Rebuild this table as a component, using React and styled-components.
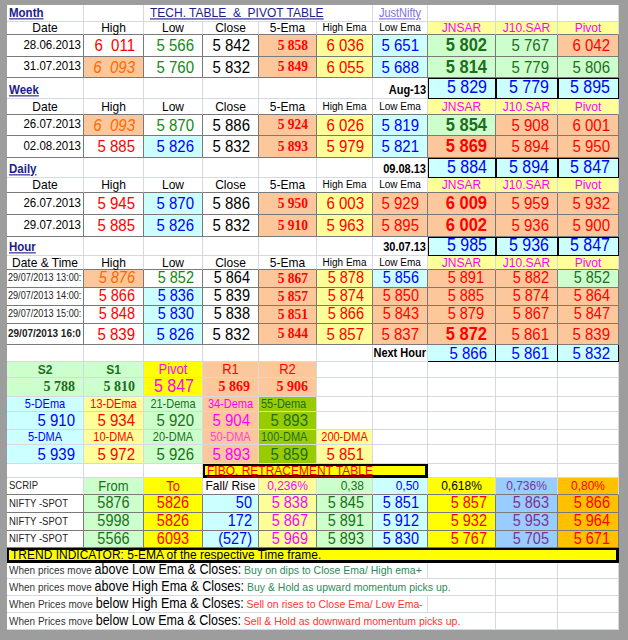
import React from 'react';
import styled, { createGlobalStyle } from 'styled-components';

const GRID = '#d5d9e4';
const DK = '#7a7a7a';
const BK = '#000';

const OR = '#fcc89b', LY = '#ffff99', CY = '#ccffff', LG = '#ccffcc', YE = '#ffff00', OL = '#99cc00', LB = '#99ccff', GD = '#ffc000';
const RED = '#ff0000', GR = '#138a13', BL = '#0000ff', MG = '#ff00ff', ORT = '#ff6600', PU = '#7f3390', NV = '#1c1c8c', DG = '#1c6e1c';
const GT = '#2e8b57', RT = '#ff3333';

const Global = createGlobalStyle`
  html, body { margin: 0; padding: 0; background: #9d9d9d; }
  body { font-family: "Liberation Sans", Arial, sans-serif; }
`;

const COLS = '77px 60px 59px 56px 58px 56px 55px 68px 62px 61px';

const FAM = {
  sans: '"Liberation Sans", Arial, sans-serif',
  serif: '"Liberation Serif", "Times New Roman", serif',
  narrow: '"Liberation Sans Narrow", "Arial Narrow", "Liberation Sans", sans-serif',
};
const JUST = { l: 'flex-start', c: 'center', r: 'flex-end' };
const SHADOW = {
  frame: 'inset 1px 1px 0 #000',
  thick: 'inset 0 0 0 2px #000',
};

const Page = styled.div`
  width: 628px;
  height: 640px;
  box-sizing: border-box;
  padding: 5px 0 0 7px;
  background: #9d9d9d;
  overflow: hidden;
`;

const Sheet = styled.div`
  width: 612px;
  background: #fff;
  display: flex;
  flex-direction: column;
`;

const Row = styled.div`
  display: grid;
  grid-template-columns: ${COLS};
  height: ${p => p.$h}px;
`;

const Cell = styled.div`
  grid-column: span ${p => p.$span || 1};
  display: flex;
  align-items: ${p => (p.$va === 'b' ? 'flex-end' : 'center')};
  justify-content: ${p => JUST[p.$al || 'c']};
  box-sizing: border-box;
  min-width: 0;
  padding: 0 ${p => p.$pr ?? 2}px ${p => (p.$va === 'b' ? 2 : 0)}px ${p => p.$pl ?? 2}px;
  background: ${p => p.$bg || 'transparent'};
  color: ${p => p.$c || '#000'};
  font-family: ${p => FAM[p.$ff || 'sans']};
  font-size: ${p => p.$fs || 12}px;
  font-weight: ${p => p.$fw || 400};
  font-style: ${p => (p.$it ? 'italic' : 'normal')};
  white-space: pre;
  border-right: 1px solid ${p => p.$vl || GRID};
  border-bottom: 1px solid ${p => p.$hl || GRID};
  box-shadow: ${p => SHADOW[p.$box] || 'none'};
  line-height: 1;
`;

/* Excel glyphs in the capture are slightly taller than wide */
const Txt = styled.span`
  display: inline-block;
  transform: scaleY(1.1);
  transform-origin: 50% 60%;
  text-decoration: ${p => (p.$ul ? 'underline' : 'none')};
`;

const Lead = styled.span`
  font-size: 10px;
  color: #333;
`;
const Key = styled.span`
  font-size: 12.5px;
  color: #000;
`;
const Advice = styled.span`
  font-size: 10.5px;
  color: ${p => p.$c};
`;

/* cell descriptors */
const C = (t, p = {}) => ({ t, p });
const B = (p = {}) => ({ t: '', p });
const N = (t, c = '#000', bg, x = {}) => ({ t, p: { $c: c, $bg: bg, $fs: 15, $al: 'r', $pr: 8, ...x } });
const E = t => ({ t, p: { $bg: OR, $c: RED, $ff: 'serif', $fw: 700, $fs: 13.5, $al: 'r', $pr: 8 } });
const BIG = { $fs: 16.5, $fw: 700 };
const DATE = t => C(t, { $fs: 11.5, $al: 'r', $pr: 2 });
const LABEL = t => C(t, { $fs: 11.5, $fw: 700, $c: NV, $ul: 1, $al: 'l', $va: 'b' });
const STAMP = t => C(t, { $fs: 11, $fw: 700, $al: 'r', $va: 'b', $pr: 1 });
const BOX = t => N(t, BL, CY, { $fs: 16, $box: 'frame', $vl: BK, $hl: BK });
const HS = { $bg: LY, $c: MG, $fs: 12 };
const HOURD = (t, bold) => C(t, { $fs: bold ? 10 : 9.1, $fw: bold ? 700 : 400, $c: '#222', $al: 'l', $pl: 1, $pr: 0 });

const header = first => [
  C(first, { $fs: 12 }),
  C('High', { $fs: 12 }),
  C('Low', { $fs: 12 }),
  C('Close', { $fs: 12 }),
  C('5-Ema', { $fs: 12 }),
  C('High Ema', { $fs: 10 }),
  C('Low Ema', { $fs: 10 }),
  C('JNSAR', HS),
  C('J10.SAR', HS),
  C('Pivot', HS),
];

const blanks = n => Array.from({ length: n }, () => B());

const SH = { $fw: 700, $fs: 12 };
const SV = { $ff: 'serif', $fw: 700, $fs: 14, $al: 'r', $pr: 8 };
const LBL = { $ff: 'narrow', $fs: 11 };
const DV = { $fs: 15 };

const hourVals = (fs, vals) => vals.map(v => ({ ...v, p: { ...v.p, $fs: v.p.$ff ? v.p.$fs : fs } }));

const ruleRow = (lead, key, adv, col, overflow) => [
  C(
    <>
      <Lead>{lead}</Lead>
      <Key>{key}</Key>
      <Advice $c={col}>{adv}</Advice>
    </>,
    { $span: 7, $al: 'l', $pl: 2, $vl: overflow ? 'transparent' : GRID }
  ),
  B(),
  B(),
  B(),
];

const rows = [
  {
    h: 17,
    cells: [
      LABEL('Month'),
      B(),
      C('TECH. TABLE  &  PIVOT TABLE', { $span: 4, $al: 'l', $pl: 6, $c: NV, $ul: 1, $fs: 12, $va: 'b' }),
      C('JustNifty', { $c: '#7b6fe0', $ul: 1, $fs: 11, $va: 'b' }),
      ...blanks(3),
    ],
  },
  { h: 13, hl: DK, cells: header('Date') },
  {
    h: 22, vl: DK, hl: DK,
    cells: [
      DATE('28.06.2013'),
      N('6\u00a0\u00a0011', RED),
      N('5 566', GR),
      N('5 842'),
      E('5 858'),
      N('6 036', RED, LY),
      N('5 651', BL, CY),
      N('5 802', DG, LG, BIG),
      N('5 767', DG, LG),
      N('6 042', RED, OR),
    ],
  },
  {
    h: 21, vl: DK, hl: DK,
    cells: [
      DATE('31.07.2013'),
      N('6\u00a0\u00a0093', ORT, OR, { $it: 1 }),
      N('5 760', GR),
      N('5 832'),
      E('5 849'),
      N('6 055', RED, LY),
      N('5 688', BL, CY),
      N('5 814', DG, LG, BIG),
      N('5 779', DG, LG),
      N('5 806', DG, LG),
    ],
  },
  { h: 21, cells: [LABEL('Week'), ...blanks(5), STAMP('Aug-13'), BOX('5 829'), BOX('5 779'), BOX('5 895')] },
  { h: 16, hl: DK, cells: header('Date') },
  {
    h: 21, vl: DK, hl: DK,
    cells: [
      DATE('26.07.2013'),
      N('6\u00a0\u00a0093', ORT, OR, { $it: 1 }),
      N('5 870', GR),
      N('5 886'),
      E('5 924'),
      N('6 026', RED, LY),
      N('5 819', BL, CY),
      N('5 854', DG, LG, BIG),
      N('5 908', RED, OR),
      N('6 001', RED, OR),
    ],
  },
  {
    h: 22, vl: DK, hl: DK,
    cells: [
      DATE('02.08.2013'),
      N('5 885', RED),
      N('5 826', BL, CY),
      N('5 832'),
      E('5 893'),
      N('5 979', RED, LY),
      N('5 821', BL, CY),
      N('5 869', RED, OR, BIG),
      N('5 894', RED, OR),
      N('5 950', RED, OR),
    ],
  },
  { h: 20, cells: [LABEL('Daily'), ...blanks(5), STAMP('09.08.13'), BOX('5 884'), BOX('5 894'), BOX('5 847')] },
  { h: 15, hl: DK, cells: header('Date') },
  {
    h: 22, vl: DK, hl: DK,
    cells: [
      DATE('26.07.2013'),
      N('5 945', RED),
      N('5 870', BL, CY),
      N('5 886'),
      E('5 950'),
      N('6 003', RED, LY),
      N('5 929', RED, OR),
      N('6 009', RED, OR, BIG),
      N('5 959', RED, OR),
      N('5 932', RED, OR),
    ],
  },
  {
    h: 22, vl: DK, hl: DK,
    cells: [
      DATE('29.07.2013'),
      N('5 885', RED),
      N('5 826', BL, CY),
      N('5 832'),
      E('5 910'),
      N('5 963', RED, LY),
      N('5 895', RED, OR),
      N('6 002', RED, OR, BIG),
      N('5 936', RED, OR),
      N('5 900', RED, OR),
    ],
  },
  { h: 19, cells: [LABEL('Hour'), ...blanks(5), STAMP('30.07.13'), BOX('5 985'), BOX('5 936'), BOX('5 847')] },
  { h: 14, hl: DK, cells: header('Date & Time') },
  {
    h: 18, vl: DK, hl: DK,
    cells: [
      HOURD('29/07/2013 13:00:'),
      ...hourVals(14.5, [
        N('5 876', ORT, OR, { $it: 1 }),
        N('5 852', GR),
        N('5 864'),
        E('5 867'),
        N('5 878', RED, LY),
        N('5 856', BL, CY),
        N('5 891', RED, OR, { $pr: 11 }),
        N('5 882', RED, OR),
        N('5 852', DG, LG),
      ]),
    ],
  },
  {
    h: 18, vl: DK, hl: DK,
    cells: [
      HOURD('29/07/2013 14:00:'),
      ...hourVals(14.5, [
        N('5 866', RED),
        N('5 836', BL, CY),
        N('5 839'),
        E('5 857'),
        N('5 874', RED, LY),
        N('5 850', RED, OR),
        N('5 885', RED, OR, { $pr: 11 }),
        N('5 874', RED, OR),
        N('5 864', RED, OR),
      ]),
    ],
  },
  {
    h: 18, vl: DK, hl: DK,
    cells: [
      HOURD('29/07/2013 15:00:'),
      ...hourVals(14.5, [
        N('5 848', RED),
        N('5 830', BL, CY),
        N('5 838'),
        E('5 851'),
        N('5 866', RED, LY),
        N('5 843', RED, OR),
        N('5 879', RED, OR, { $pr: 11 }),
        N('5 867', RED, OR),
        N('5 847', RED, OR),
      ]),
    ],
  },
  {
    h: 21, vl: DK, hl: DK,
    cells: [
      HOURD('29/07/2013 16:0', true),
      N('5 839', RED),
      N('5 826', BL, CY),
      N('5 832'),
      E('5 844'),
      N('5 857', RED, LY),
      N('5 837', RED, OR),
      N('5 872', RED, OR, BIG),
      N('5 861', RED, OR),
      N('5 839', RED, OR),
    ],
  },
  {
    h: 17,
    cells: [
      ...blanks(6),
      STAMP('Next Hour'),
      N('5 866', BL, CY, { $vl: BK, $hl: BK }),
      N('5 861', BL, CY, { $vl: BK, $hl: BK }),
      N('5 832', BL, CY, { $vl: BK, $hl: BK }),
    ],
  },
  {
    h: 16,
    cells: [
      C('S2', { ...SH, $bg: LG, $c: DG }),
      C('S1', { ...SH, $bg: LG, $c: DG }),
      C('Pivot', { $fs: 13, $bg: YE, $c: MG }),
      C('R1', { $fs: 13, $bg: OR, $c: RED }),
      C('R2', { $fs: 13, $bg: OR, $c: RED }),
      ...blanks(5),
    ],
  },
  {
    h: 19,
    cells: [
      C('5 788', { ...SV, $bg: LG, $c: DG }),
      C('5 810', { ...SV, $bg: LG, $c: DG }),
      C('5 847', { $fs: 16, $bg: YE, $c: MG, $al: 'r', $pr: 8 }),
      C('5 869', { ...SV, $bg: OR, $c: RED }),
      C('5 906', { ...SV, $bg: OR, $c: RED }),
      ...blanks(5),
    ],
  },
  {
    h: 15,
    cells: [
      C('5-DEma', { ...LBL, $bg: CY, $c: BL }),
      C('13-DEma', { ...LBL, $bg: LY, $c: RED }),
      C('21-Dema', { ...LBL, $bg: LG, $c: DG }),
      C('34-Dema', { ...LBL, $bg: OR, $c: MG }),
      C('55-Dema', { ...LBL, $bg: OL, $c: DG, $al: 'l' }),
      ...blanks(5),
    ],
  },
  {
    h: 18,
    cells: [
      N('5 910', BL, CY, DV),
      N('5 934', RED, LY, DV),
      N('5 920', DG, LG, DV),
      N('5 904', MG, OR, DV),
      N('5 893', DG, OL, DV),
      ...blanks(5),
    ],
  },
  {
    h: 15,
    cells: [
      C('5-DMA', { ...LBL, $bg: CY, $c: BL }),
      C('10-DMA', { ...LBL, $bg: LY, $c: RED }),
      C('20-DMA', { ...LBL, $bg: LG, $c: DG }),
      C('50-DMA', { ...LBL, $bg: OR, $c: '#ff44cc' }),
      C('100-DMA', { ...LBL, $bg: OL, $c: DG, $al: 'l' }),
      C('200-DMA', { ...LBL, $bg: LY, $c: RED }),
      ...blanks(4),
    ],
  },
  {
    h: 19,
    cells: [
      N('5 939', BL, CY, DV),
      N('5 972', RED, LY, DV),
      N('5 926', DG, LG, DV),
      N('5 893', MG, OR, DV),
      N('5 859', DG, OL, DV),
      N('5 851', RED, LY, DV),
      ...blanks(4),
    ],
  },
  {
    h: 14,
    cells: [
      ...blanks(3),
      C('FIBO. RETRACEMENT TABLE', { $span: 4, $bg: YE, $c: RED, $ul: 1, $fs: 12, $al: 'l', $pl: 4, $box: 'thick', $vl: BK, $hl: BK }),
      ...blanks(3),
    ],
  },
  {
    h: 17, hl: DK,
    cells: [
      C('SCRIP', { $fs: 9.5, $al: 'l', $c: '#222' }),
      C('From', { $fs: 13, $bg: LG, $c: DG }),
      C('To', { $fs: 13, $bg: YE, $c: RED }),
      C('Fall/ Rise', { $fs: 12 }),
      C('0,236%', { $fs: 12, $bg: LY, $c: MG }),
      C('0,38', { $fs: 12, $bg: LG, $c: DG, $al: 'r', $pr: 8 }),
      C('0,50', { $fs: 12, $bg: CY, $c: BL, $al: 'r', $pr: 8 }),
      C('0,618%', { $fs: 12, $bg: YE }),
      C('0,736%', { $fs: 12, $bg: LB, $c: PU }),
      C('0,80%', { $fs: 12, $bg: GD, $c: RED }),
    ],
  },
  ...[
    ['5876', '5826', '50', '5 838', '5 845', '5 851', '5 857', '5 863', '5 866'],
    ['5998', '5826', '172', '5 867', '5 891', '5 912', '5 932', '5 953', '5 964'],
    ['5566', '6093', '(527)', '5 969', '5 893', '5 830', '5 767', '5 705', '5 671'],
  ].map((v, i) => ({
    h: i === 2 ? 17 : 18,
    vl: DK,
    hl: DK,
    cells: [
      C('NIFTY -SPOT', { $fs: 9.5, $al: 'l', $c: '#222' }),
      C(v[0], { $fs: 14.5, $bg: LG, $c: DG }),
      C(v[1], { $fs: 14.5, $bg: YE, $c: RED }),
      N(v[2], BL, CY, { $fs: 14.5, $pr: 6 }),
      N(v[3], MG, LY, { $fs: 14.5 }),
      N(v[4], DG, LG, { $fs: 14.5 }),
      N(v[5], BL, CY, { $fs: 14.5 }),
      N(v[6], RED, YE, { $fs: 14.5 }),
      N(v[7], PU, LB, { $fs: 14.5 }),
      N(v[8], RED, GD, { $fs: 14.5 }),
    ],
  })),
  {
    h: 15,
    cells: [
      C('TREND INDICATOR: 5-EMA of the respective Time frame.', { $span: 10, $bg: YE, $fs: 12, $al: 'l', $pl: 4, $box: 'thick', $vl: BK, $hl: BK }),
    ],
  },
  { h: 16, cells: ruleRow('When prices move ', 'above Low Ema & Closes:', ' Buy on dips to Close Ema/ High ema+', GT, false) },
  { h: 17, cells: ruleRow('When prices move ', 'above High Ema & Closes:', ' Buy & Hold as upward momentum picks up.', GT, true) },
  { h: 17, cells: ruleRow('When Prices move ', 'below High Ema & Closes:', ' Sell on rises to Close Ema/ Low Ema-', RT, false) },
  { h: 17, cells: ruleRow('When Prices move ', 'below Low Ema & Closes:', ' Sell & Hold as downward momentum picks up.', RT, true) },
];

export default function App() {
  return (
    <>
      <Global />
      <Page>
        <Sheet>
          {rows.map((r, ri) => (
            <Row key={ri} $h={r.h}>
              {r.cells.map((cell, ci) => {
                const { $ul, ...rest } = cell.p;
                return (
                  <Cell key={ci} $vl={r.vl} $hl={r.hl} {...rest}>
                    {cell.t === '' ? null : <Txt $ul={$ul}>{cell.t}</Txt>}
                  </Cell>
                );
              })}
            </Row>
          ))}
        </Sheet>
      </Page>
    </>
  );
}
